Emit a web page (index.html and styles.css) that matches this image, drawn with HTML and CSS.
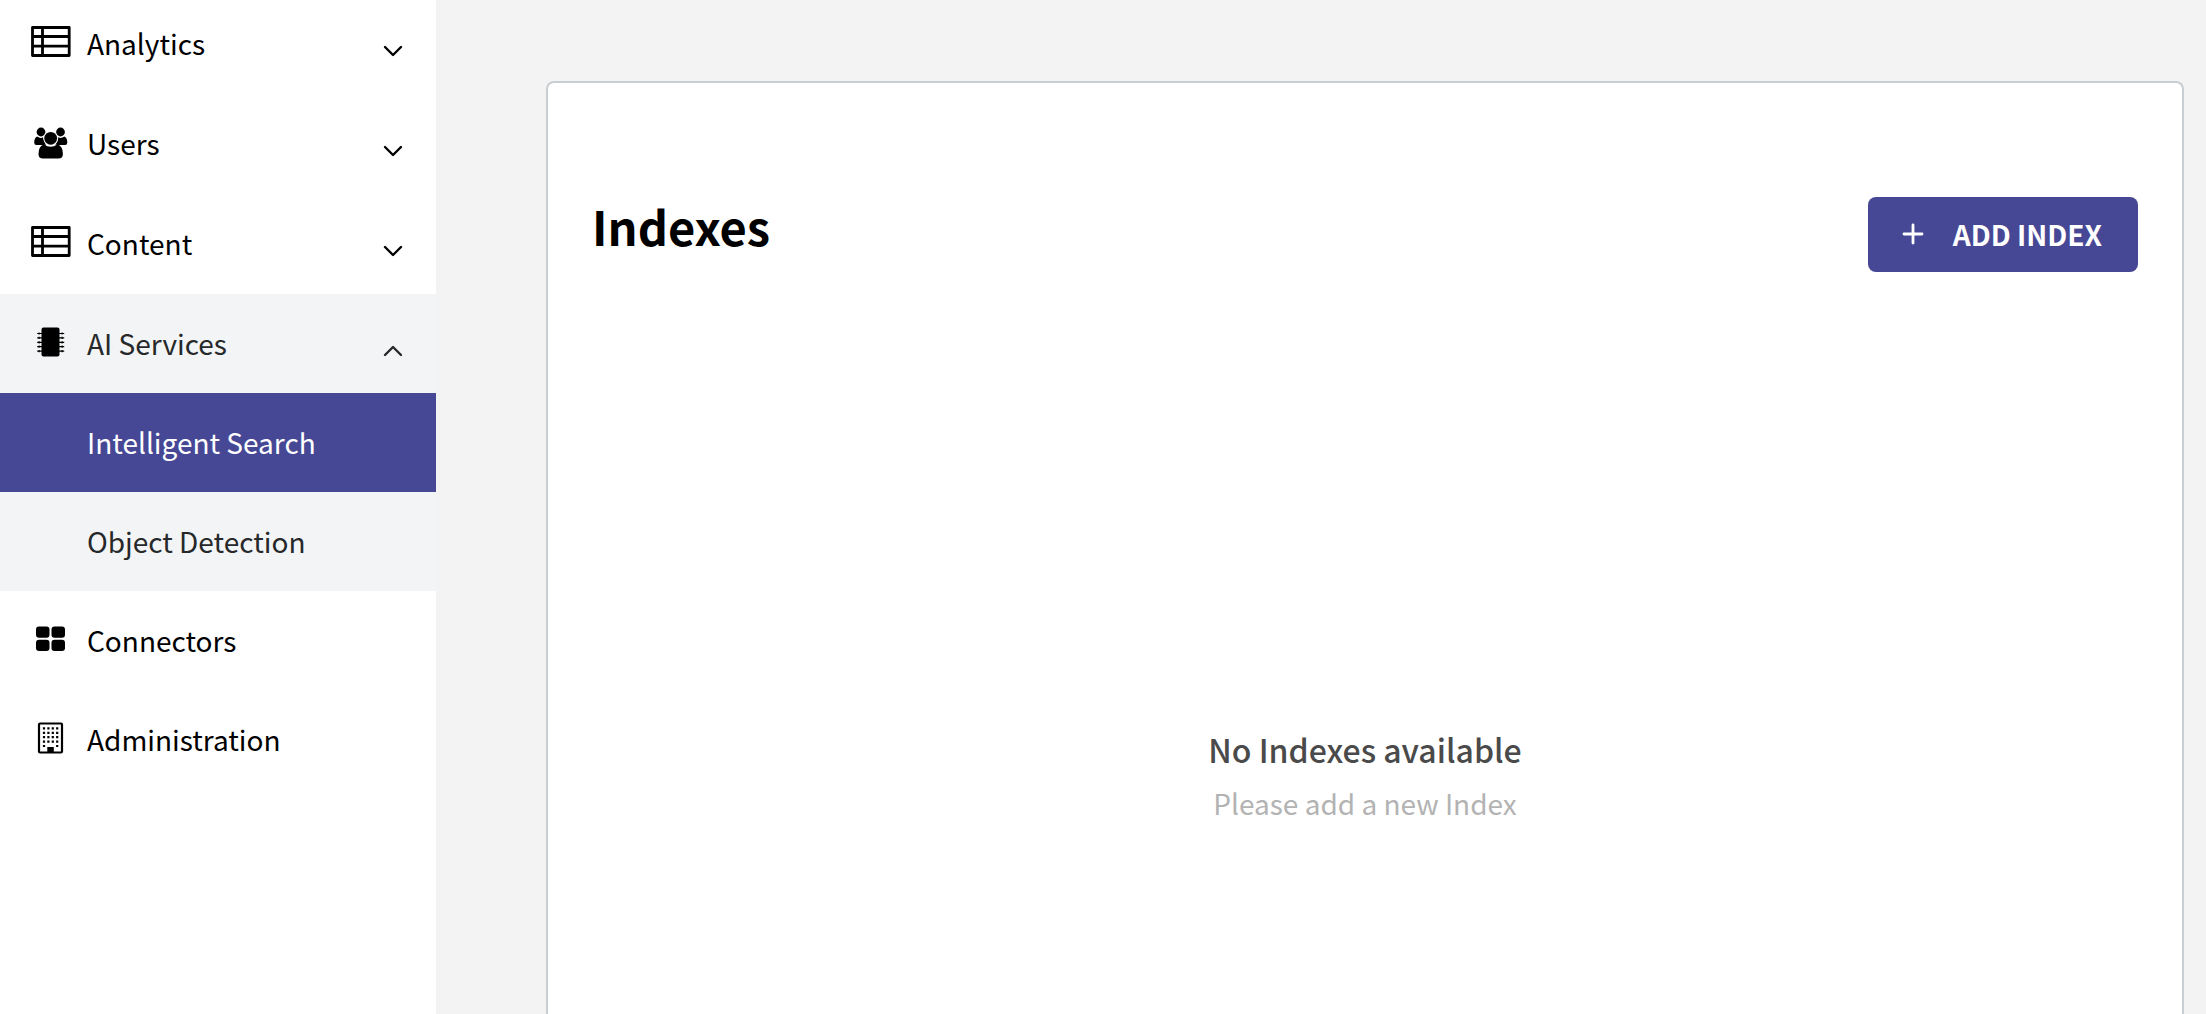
FILE: index.html
```
<!DOCTYPE html>
<html lang="en">

<head>
    <meta charset="UTF-8">
    <meta name="viewport" content="width=device-width, initial-scale=1.0">
    <title>Indexes</title>
    <link rel="stylesheet" href="styles.css">
</head>

<body>
    <div class="layout">
        <nav class="sidebar">
            <button type="button" class="nav-item nav-group">
                <svg class="nav-icon" viewBox="0 0 40 40">
                    <path d="M1.500 4.500h36.700v28H1.500zM1.500 13.500h36.700M1.500 23.200h36.700M11.500 4.500v28" fill="none" stroke="#000" stroke-width="2.800" stroke-linejoin="round" />
                </svg>
                <span>Analytics</span>
                <svg class="chevron" viewBox="0 0 20 12"><path d="M2 2l8 8 8-8" /></svg>
            </button>
            <button type="button" class="nav-item nav-group">
                <svg class="nav-icon" viewBox="0 0 40 40">
                    <circle cx="10" cy="9" r="4.4" />
                    <circle cx="29.500" cy="9" r="4.4" />
                    <path d="M6 13.500Q10 16 12.200 14q.2 5 3 7.500Q12.500 22 10.500 22H5.500q-2.300 0-2.300-2.500 0-4.500 2.800-6zM33.500 13.500Q29.500 16 27.300 14q-.2 5-3 7.500 2.700.5 4.700.5H34q2.300 0 2.300-2.500 0-4.500-2.800-6z" />
                    <circle cx="19.700" cy="15.300" r="7.300" fill="#fff" />
                    <circle cx="19.700" cy="15.300" r="6.400" />
                    <path d="M13.200 21.500q6.500 4.500 13 0 5.700 1.200 5.700 9.500 0 4.500-4.500 4.500H12q-4.500 0-4.500-4.500 0-8.300 5.700-9.500z" />
                </svg>
                <span>Users</span>
                <svg class="chevron" viewBox="0 0 20 12"><path d="M2 2l8 8 8-8" /></svg>
            </button>
            <button type="button" class="nav-item nav-group">
                <svg class="nav-icon" viewBox="0 0 40 40">
                    <path d="M1.500 4.500h36.700v28H1.500zM1.500 13.500h36.700M1.500 23.200h36.700M11.500 4.500v28" fill="none" stroke="#000" stroke-width="2.800" stroke-linejoin="round" />
                </svg>
                <span>Content</span>
                <svg class="chevron" viewBox="0 0 20 12"><path d="M2 2l8 8 8-8" /></svg>
            </button>
            <button type="button" class="nav-item nav-open">
                <svg class="nav-icon" viewBox="0 0 40 40">
                    <rect x="10.500" y="4.500" width="18" height="29" rx="2" />
                    <path d="M6.200 10.500h27M6.200 14.900h27M6.200 19.300h27M6.200 23.700h27M6.200 28.100h27" stroke="#000" stroke-width="1.200" />
                    <path d="M7.500 10.500h1.200M7.500 14.900h1.200M7.500 19.300h1.200M7.500 23.700h1.200M7.500 28.100h1.200M30.500 10.500h1.200M30.500 14.900h1.200M30.500 19.300h1.200M30.500 23.700h1.200M30.500 28.100h1.200" stroke="#000" stroke-width="2.200" />
                </svg>
                <span>AI Services</span>
                <svg class="chevron" viewBox="0 0 20 12"><path d="M2 10l8-8 8 8" /></svg>
            </button>
            <a href="#" class="nav-item nav-sub active"><span>Intelligent Search</span></a>
            <a href="#" class="nav-item nav-sub"><span>Object Detection</span></a>
            <a href="#" class="nav-item">
                <svg class="nav-icon" viewBox="0 0 40 40">
                    <rect x="5" y="6.500" width="13.500" height="11.300" rx="3" />
                    <rect x="20.500" y="6.500" width="13.500" height="11.300" rx="3" />
                    <rect x="5" y="19.700" width="13.500" height="11.300" rx="3" />
                    <rect x="20.500" y="19.700" width="13.500" height="11.300" rx="3" />
                </svg>
                <span>Connectors</span>
            </a>
            <a href="#" class="nav-item">
                <svg class="nav-icon" viewBox="0 0 40 40">
                    <rect x="8" y="4.500" width="23" height="29" rx="1" fill="none" stroke="#000" stroke-width="2.200" />
                    <path d="M11.900 9.400H29M11.900 13.800H29M11.900 18.200H29M11.900 22.600H29M11.900 27h2.200M25.100 27h2.200" stroke="#000" stroke-width="2.200" stroke-dasharray="2.200 2.200" />
                    <path d="M16.300 28h6.500V33h-6.500z" />
                </svg>
                <span>Administration</span>
            </a>
        </nav>
        <main class="content">
            <section class="card">
                <header class="card-header">
                    <h1>Indexes</h1>
                    <button type="button" class="btn-add">
                        <svg class="plus" viewBox="0 0 22 22"><path d="M11 2v18M2 11h18" /></svg>
                        ADD INDEX
                    </button>
                </header>
                <div class="empty">
                    <h2>No Indexes available</h2>
                    <p>Please add a new Index</p>
                </div>
            </section>
        </main>
    </div>
</body>

</html>
```

FILE: styles.css
```
* {
    box-sizing: border-box;
    padding: 0;
    margin: 0;
}

body {
    background-color: #f3f3f3;
    font-family: "Noto Sans CJK SC", "Noto Sans", sans-serif;
    font-size: 28px;
    line-height: 40px;
    color: #000;
}

.layout {
    display: flex;
    min-height: 100vh;
}

.sidebar {
    flex: 0 0 436px;
    /* list is scrolled a little under the top edge */
    margin-top: -6px;
    background-color: #fff;
}

.nav-item {
    display: flex;
    align-items: center;
    gap: 16px;
    width: 100%;
    height: 99px;
    padding: 0 33px 2px 31px;
    border: 0;
    background: none;
    color: #000;
    font: inherit;
    text-align: left;
    text-decoration: none;
    cursor: pointer;
}

.nav-group {
    height: 100px;
}

.nav-open,
.nav-sub {
    background-color: #f3f4f6;
    color: #262829;
}

.nav-sub {
    padding-left: 87px;
}

.nav-sub.active {
    background-color: #464896;
    color: #fff;
}

.nav-icon {
    width: 40px;
    height: 40px;
}

.chevron {
    width: 20px;
    height: 12px;
    margin: 16px 0 0 auto;
}

.chevron path,
.plus path {
    fill: none;
    stroke: currentColor;
    stroke-width: 2.4;
    stroke-linecap: round;
    stroke-linejoin: round;
}

.plus path {
    stroke-width: 2.8;
}

.content {
    display: flex;
    flex: 1;
    padding: 81px 22px 0 110px;
}

/* card runs down to the bottom of the window */
.card {
    flex: 1;
    padding: 114px 44px 44px;
    border: 2px solid #c9ced2;
    border-bottom: 0;
    border-radius: 8px 8px 0 0;
    background-color: #fff;
}

.card-header {
    display: flex;
    justify-content: space-between;
    align-items: flex-start;
}

h1 {
    font-size: 47px;
    line-height: 58px;
    font-weight: 700;
}

.btn-add {
    display: flex;
    align-items: center;
    gap: 29px;
    height: 75px;
    padding: 0 36px 1px 34px;
    border: 0;
    border-radius: 8px;
    background-color: #464896;
    color: #fff;
    font: inherit;
    font-weight: 700;
    cursor: pointer;
}

.plus {
    width: 22px;
    height: 22px;
}

.empty {
    margin-top: 449px;
    text-align: center;
}

h2 {
    font-size: 32px;
    line-height: 56px;
    font-weight: 500;
    color: #4a4a4a;
}

.empty p {
    line-height: 52px;
    color: #b3b3b3;
}
```
